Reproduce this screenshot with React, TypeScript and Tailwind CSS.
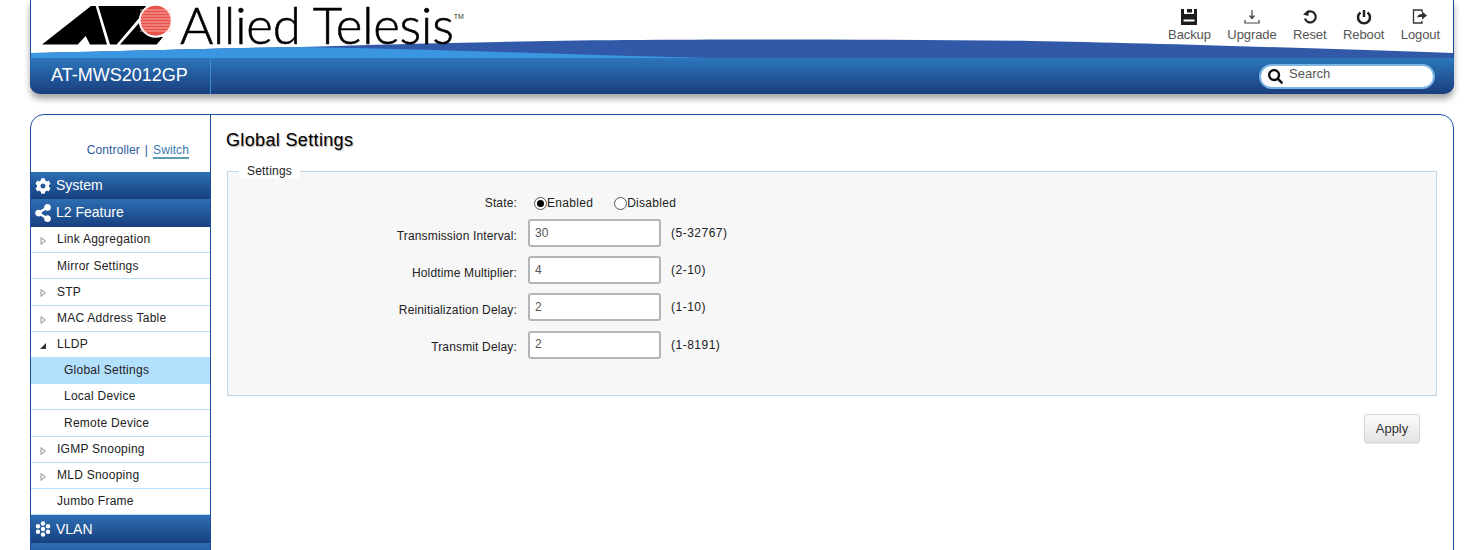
import { FaCog, FaSearch, FaShareAlt } from "react-icons/fa";

const tools = [
  { label: "Backup", icon: <BackupIcon /> },
  { label: "Upgrade", icon: <UpgradeIcon /> },
  { label: "Reset", icon: <ResetIcon /> },
  { label: "Reboot", icon: <RebootIcon /> },
  { label: "Logout", icon: <LogoutIcon /> },
];

const menu = [
  { label: "Link Aggregation", arrow: "closed" },
  { label: "Mirror Settings" },
  { label: "STP", arrow: "closed" },
  { label: "MAC Address Table", arrow: "closed" },
  { label: "LLDP", arrow: "open" },
  { label: "Global Settings", sub: true, active: true },
  { label: "Local Device", sub: true },
  { label: "Remote Device", sub: true },
  { label: "IGMP Snooping", arrow: "closed" },
  { label: "MLD Snooping", arrow: "closed" },
  { label: "Jumbo Frame" },
];

const fields = [
  { label: "Transmission Interval:", value: "30", hint: "(5-32767)" },
  { label: "Holdtime Multiplier:", value: "4", hint: "(2-10)" },
  { label: "Reinitialization Delay:", value: "2", hint: "(1-10)" },
  { label: "Transmit Delay:", value: "2", hint: "(1-8191)" },
];

function BackupIcon() {
  return (
    <svg width="16" height="16" viewBox="0 0 16 16" fill="#1c1c1c">
      <path d="M0 0h3v5h10V0h3v16H0z" />
      <path d="M6 0h5v3.500H6z" />
      <path d="M2.500 10.500h11v2h-11z" fill="#fff" />
    </svg>
  );
}

function UpgradeIcon() {
  return (
    <svg width="16" height="16" viewBox="0 0 16 16" fill="none" stroke="#444" strokeWidth="1.200">
      <path d="M8 1v8M5.500 6.500 8 9.500l2.500-3M1 11v3h14v-3" />
    </svg>
  );
}

function ResetIcon() {
  return (
    <svg width="16" height="16" viewBox="0 0 16 16" fill="none" stroke="#222" strokeWidth="2.200">
      <path d="M5 3.500A5.500 5.500 0 1 1 3 9.500" />
      <path d="M1 5.500 6.500 1v6z" fill="#222" stroke="none" />
    </svg>
  );
}

function RebootIcon() {
  return (
    <svg width="16" height="16" viewBox="0 0 16 16" fill="none" stroke="#222" strokeWidth="2.500">
      <path d="M8 1v7" />
      <path d="M4.500 3.500a6 6 0 1 0 7 0" />
    </svg>
  );
}

function LogoutIcon() {
  return (
    <svg width="16" height="16" viewBox="0 0 16 16" fill="none" stroke="#333" strokeWidth="1.300">
      <path d="M10 3V1H1.500v13H10v-2" />
      <path d="M5 8.500c.5-2.500 2.500-3.500 5-3.500V2.500L15 6.500l-5 4V8c-2 0-3.500 0-5 .5z" fill="#333" stroke="none" />
    </svg>
  );
}

function VlanIcon() {
  return (
    <svg width="16" height="16" viewBox="0 0 16 16" fill="#fff">
      <circle cx="8" cy="8" r="2.200" />
      <circle cx="8" cy="2.500" r="2.200" />
      <circle cx="8" cy="13.500" r="2.200" />
      <circle cx="3" cy="5.200" r="2.200" />
      <circle cx="13" cy="5.200" r="2.200" />
      <circle cx="3" cy="10.800" r="2.200" />
      <circle cx="13" cy="10.800" r="2.200" />
    </svg>
  );
}

function LogoMark() {
  return (
    <svg width="131" height="40" viewBox="0 0 131 40" className="shrink-0">
      <path d="M1 39.500 50 1h4.700L66 39.500H49L44.700 31l-8 8.500z" fill="#000" />
      <path d="M57.300 1H105L100.700 10 75.700 39.500H69z" fill="#000" />
      <path d="M79 39.500 100 15.700l5.700 11L122 32l-6.300 7.500z" fill="#000" />
      <circle cx="114.700" cy="15.700" r="17" fill="#fff" />
      <circle cx="114.700" cy="15.700" r="15" fill="#e8504a" />
      <path d="M99 5h31M99 8h31M99 11h31M99 14h31M99 17h31M99 20h31M99 23h31M99 26h31" stroke="#f8c4bc" strokeWidth="0.800" />
    </svg>
  );
}

function MenuHeader({ label, icon, h }: { label: string; icon: React.ReactNode; h: string }) {
  return (
    <div className={`${h} flex items-center gap-[5px] pl-[4px] bg-gradient-to-b from-[#2d6fb3] to-[#18407f] text-[14px] text-white`}>
      <span className="w-[16px] flex justify-center">{icon}</span>
      <span>{label}</span>
    </div>
  );
}

export default function App() {
  return (
    <div className="h-[550px] overflow-hidden bg-white font-['Liberation_Sans',Arial,sans-serif] text-[12px] text-[#222]">
      <div className="mx-[30px] h-[94px] relative rounded-b-[10px] border-x border-[#1f4ea1] shadow-[0_5px_6px_rgba(0,0,0,0.35)]">
        {/* header swoosh */}
        <svg className="absolute left-0 top-[38px]" width="1422" height="20" viewBox="0 0 1422 20" preserveAspectRatio="none">
          <path d="M0 15C100 13 200 10 270 9C340 7 400 5 470 4C600 1 800 1 1000 3C1120 5 1300 11 1422 15V20H0z" fill="#3159a8" />
          <path d="M0 15C100 13 200 10 270 9C340 10 400 12 470 14C540 16 600 18 680 20H0z" fill="#3a96e0" />
        </svg>
        <div className="relative h-[58px] flex justify-between">
          <div className="flex items-start pl-[10px] pt-[5px]">
            <LogoMark />
            <span className="ml-[8px] -mt-[5px] text-[51px] leading-[50px] tracking-[-0.2px] text-black font-['Lato',sans-serif] font-light [-webkit-text-stroke:0.6px_black]">Allied Telesis</span>
            <span className="mt-[7px] text-[7px] text-[#333]">TM</span>
          </div>
          <div className="flex pr-[13px] pt-[9px] gap-[16.500px]">
            {tools.map((t) => (
              <div key={t.label} className="flex flex-col items-center gap-[1px] text-[13px] leading-[17px] tracking-[-0.1px] text-[#555]">
                {t.icon}
                <span>{t.label}</span>
              </div>
            ))}
          </div>
        </div>
        <div className="relative h-[36px] flex items-center justify-between rounded-b-[10px] -mx-px bg-gradient-to-b from-[#2d76bb] to-[#1a3e7e]">
          <div className="w-[181px] h-full flex items-center pl-[21px] pb-[2px] border-r border-[#3a8dd0] text-[18px] text-white">AT-MWS2012GP</div>
          <div className="w-[176px] h-[25px] mr-[19px] mt-[1px] flex items-center gap-[6px] pl-[7px] rounded-full bg-white border-2 border-[#79b4e3] text-[13px] text-[#555]">
            <FaSearch className="text-[15px] text-[#111]" />
            <span className="-mt-[5px]">Search</span>
          </div>
        </div>
      </div>

      <div className="mx-[30px] mt-[20px] h-[500px] flex rounded-t-[14px] border border-[#1f4ea1]">
        <aside className="w-[180px] shrink-0 border-r border-[#1f4ea1]">
          <div className="h-[57px] flex justify-end items-start pt-[26px] pr-[21px] text-[12px] tracking-[0.1px] text-[#2a5a9c]">
            <span>Controller</span>
            <span className="mx-[5px]">|</span>
            <span className="border-b-2 border-[#5b9eb3] h-[18px] text-[#3a7ab0]">Switch</span>
          </div>
          <MenuHeader label="System" h="h-[27px]" icon={<FaCog className="text-[16px]" />} />
          <MenuHeader label="L2 Feature" h="h-[28px] pb-[1px]" icon={<FaShareAlt className="text-[18px]" />} />
          {menu.map((m) => (
            <div
              key={m.label}
              className={`h-[26.200px] pb-[0.500px] flex items-center border-b border-[#b3e0fd] text-[12px] text-[#222] tracking-[0.25px] ${m.sub ? "pl-[33px]" : "pl-[26px]"} ${m.active ? "bg-[#b3e0fd]" : ""} relative`}
            >
              {m.arrow === "closed" && (
                <svg className="absolute left-[9px] top-[9px]" width="7" height="10" viewBox="0 0 7 10">
                  <path d="M1 1.500 5.500 5 1 8.500z" fill="#eee" stroke="#999" />
                </svg>
              )}
              {m.arrow === "open" && (
                <span className="absolute left-[9px] top-[11px] w-0 h-0 border-b-[6px] border-b-[#333] border-l-[6px] border-l-transparent" />
              )}
              {m.label}
            </div>
          ))}
          <MenuHeader label="VLAN" h="h-[28px]" icon={<VlanIcon />} />
          <MenuHeader label="" h="h-[28px]" icon={null} />
        </aside>

        <main className="flex-1 pl-[15px] pr-[16px]">
          <h1 className="mt-[14px] text-[18px] leading-[22px] tracking-[0.35px] text-black [text-shadow:1px_1px_1px_#aaa]">Global Settings</h1>
          <fieldset className="mt-[13px] h-[232px] border border-[#bcd8ec] bg-[#f7f7f7] ml-[1px]">
            <legend className="ml-[11px] px-[8px] text-[12px] tracking-[0.2px] bg-white leading-[14px]">Settings</legend>
            <div className="pt-[15px] tracking-[0.15px]">
              <div className="flex items-center h-[20px]">
                <span className="w-[289px] text-right">State:</span>
                <span className="ml-[17px] flex items-center tracking-[0.3px]">
                  <span className="w-[13px] h-[13px] rounded-full border border-[#555] bg-white flex items-center justify-center">
                    <span className="w-[7px] h-[7px] rounded-full bg-black" />
                  </span>
                  Enabled
                </span>
                <span className="ml-[21px] flex items-center tracking-[0.3px]">
                  <span className="w-[13px] h-[13px] rounded-full border border-[#555] bg-white" />
                  Disabled
                </span>
              </div>
              <div className="mt-[6px] flex flex-col gap-[9.200px]">
                {fields.map((f) => (
                  <div key={f.label} className="flex items-center h-[28px]">
                    <span className="w-[289px] mt-[5px] text-right">{f.label}</span>
                    <input
                      readOnly
                      value={f.value}
                      className="ml-[11px] w-[133px] h-[28px] px-[5px] pb-[1px] rounded-[3px] border-2 border-[#b5b5b5] bg-white text-[12px] text-[#555] outline-none"
                    />
                    <span className="ml-[10px] text-[12px] tracking-[0.5px]">{f.hint}</span>
                  </div>
                ))}
              </div>
            </div>
          </fieldset>
          <div className="mt-[18px] flex justify-end pr-[17px]">
            <button className="w-[56px] h-[29px] rounded-[3px] border border-[#d5d5d5] bg-gradient-to-b from-[#fbfbfb] to-[#e4e4e4] text-[13px] text-[#333] shadow-[0_1px_1px_rgba(0,0,0,0.1)]">Apply</button>
          </div>
        </main>
      </div>
    </div>
  );
}
